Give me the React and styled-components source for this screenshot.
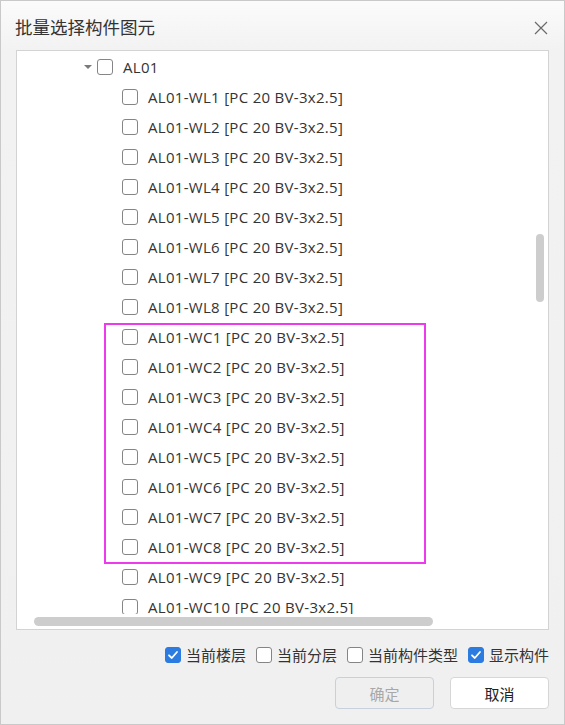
import React from "react"
import styled, { createGlobalStyle } from "styled-components"

const GlobalStyle = createGlobalStyle`
  body {
    margin: 0;
    font-family: "Open Sans", "Noto Sans CJK SC", sans-serif;
  }
`

const children = [
  "WL1", "WL2", "WL3", "WL4", "WL5", "WL6", "WL7", "WL8",
  "WC1", "WC2", "WC3", "WC4", "WC5", "WC6", "WC7", "WC8", "WC9", "WC10",
]

const options = [
  { label: "当前楼层", checked: true },
  { label: "当前分层", checked: false },
  { label: "当前构件类型", checked: false },
  { label: "显示构件", checked: true },
]

const Check = ({ checked }) => (
  <Box $checked={checked}>
    {checked && (
      <svg width="12" height="12" viewBox="0 0 12 12">
        <path d="M2 6.3 L4.8 9 L10 3" fill="none" stroke="#fff" strokeWidth="1.8" strokeLinecap="round" strokeLinejoin="round" />
      </svg>
    )}
  </Box>
)

const App = () => (
  <>
    <GlobalStyle />
    <Dialog>
      <Header>
        <Title>批量选择构件图元</Title>
        <Close>
          <svg width="14" height="14" viewBox="0 0 14 14">
            <path d="M1 1 L13 13 M13 1 L1 13" stroke="#6a6a6a" strokeWidth="1.2" />
          </svg>
        </Close>
      </Header>
      <Panel>
        <Tree>
          <Row $indent={67}>
            <Caret />
            <Check />
            <Label>AL01</Label>
          </Row>
          {children.map((c) => (
            <Row key={c} $indent={105}>
              <Check />
              <Label>AL01-{c} [PC 20 BV-3x2.5]</Label>
            </Row>
          ))}
        </Tree>
        <HBar>
          <HThumb />
        </HBar>
        <VThumb />
        <Highlight />
      </Panel>
      <Options>
        {options.map((o) => (
          <Option key={o.label}>
            <Check checked={o.checked} />
            <span>{o.label}</span>
          </Option>
        ))}
      </Options>
      <Buttons>
        <Button disabled>确定</Button>
        <Button>取消</Button>
      </Buttons>
    </Dialog>
  </>
)

export default App

const Dialog = styled.div`
  width: 565px;
  height: 725px;
  box-sizing: border-box;
  border: 1px solid #c9c9c9;
  background: linear-gradient(#fbfbfb 0, #f2f2f2 50px, #f0f0f0 100%);
  display: flex;
  flex-direction: column;
`

const Header = styled.div`
  height: 49px;
  display: flex;
  align-items: center;
  justify-content: space-between;
  padding: 0 16px 0 14px;
`

const Title = styled.div`
  font-family: "Noto Sans CJK SC", sans-serif;
  font-size: 17.5px;
  color: #333;
  margin-top: 2px;
`

const Close = styled.div`
  display: flex;
  margin-top: 4px;
`

const Panel = styled.div`
  position: relative;
  margin: 0 15px;
  height: 580px;
  box-sizing: border-box;
  border: 1px solid #d3d3d3;
  background: #fff;
  overflow: hidden;
  display: flex;
  flex-direction: column;
`

const Tree = styled.div`
  height: 563px;
  overflow: hidden;
  padding-top: 1px;
  box-sizing: border-box;
`

const Row = styled.div`
  height: 30px;
  display: flex;
  align-items: center;
  padding-left: ${(p) => p.$indent}px;
  white-space: nowrap;
`

const Caret = styled.span`
  width: 0;
  height: 0;
  border-left: 4px solid transparent;
  border-right: 4px solid transparent;
  border-top: 4px solid #7a7a7a;
  margin-right: 5px;
`

const Box = styled.span`
  flex: none;
  width: 16px;
  height: 16px;
  box-sizing: border-box;
  border-radius: 3px;
  border: 1px solid ${(p) => (p.$checked ? "#2b7be0" : "#858585")};
  background: ${(p) => (p.$checked ? "#2b7be0" : "#fff")};
  display: flex;
  align-items: center;
  justify-content: center;
`

const Label = styled.span`
  margin-left: 10px;
  font-size: 15px;
  letter-spacing: 0.3px;
  color: #333;
`

const HBar = styled.div`
  flex: 1;
  padding: 3px 0 0 17px;
`

const HThumb = styled.div`
  width: 399px;
  height: 9px;
  border-radius: 5px;
  background: #cdcdcd;
`

const VThumb = styled.div`
  position: absolute;
  left: 519px;
  top: 183px;
  width: 8px;
  height: 68px;
  border-radius: 4px;
  background: #cdcdcd;
`

const Highlight = styled.div`
  position: absolute;
  left: 87px;
  top: 272px;
  width: 322px;
  height: 241px;
  box-sizing: border-box;
  border: 2px solid #ec3aec;
`

const Options = styled.div`
  display: flex;
  justify-content: flex-end;
  gap: 10px;
  padding: 15px 15px 0 0;
  height: 32px;
  box-sizing: border-box;
  align-items: center;
  margin-top: 1px;
`

const Option = styled.label`
  display: flex;
  align-items: center;
  gap: 5px;
  font-family: "Noto Sans CJK SC", sans-serif;
  font-size: 15px;
  color: #333;
`

const Buttons = styled.div`
  display: flex;
  justify-content: flex-end;
  gap: 16px;
  padding: 14px 15px 0 0;
`

const Button = styled.button`
  width: 99px;
  height: 32px;
  box-sizing: border-box;
  border-radius: 4px;
  font-family: "Noto Sans CJK SC", sans-serif;
  font-size: 15px;
  background: ${(p) => (p.disabled ? "#efefef" : "#fff")};
  border: 1px solid ${(p) => (p.disabled ? "#c7d0dc" : "#d6d6d6")};
  color: ${(p) => (p.disabled ? "#a8a8a8" : "#222")};
`
